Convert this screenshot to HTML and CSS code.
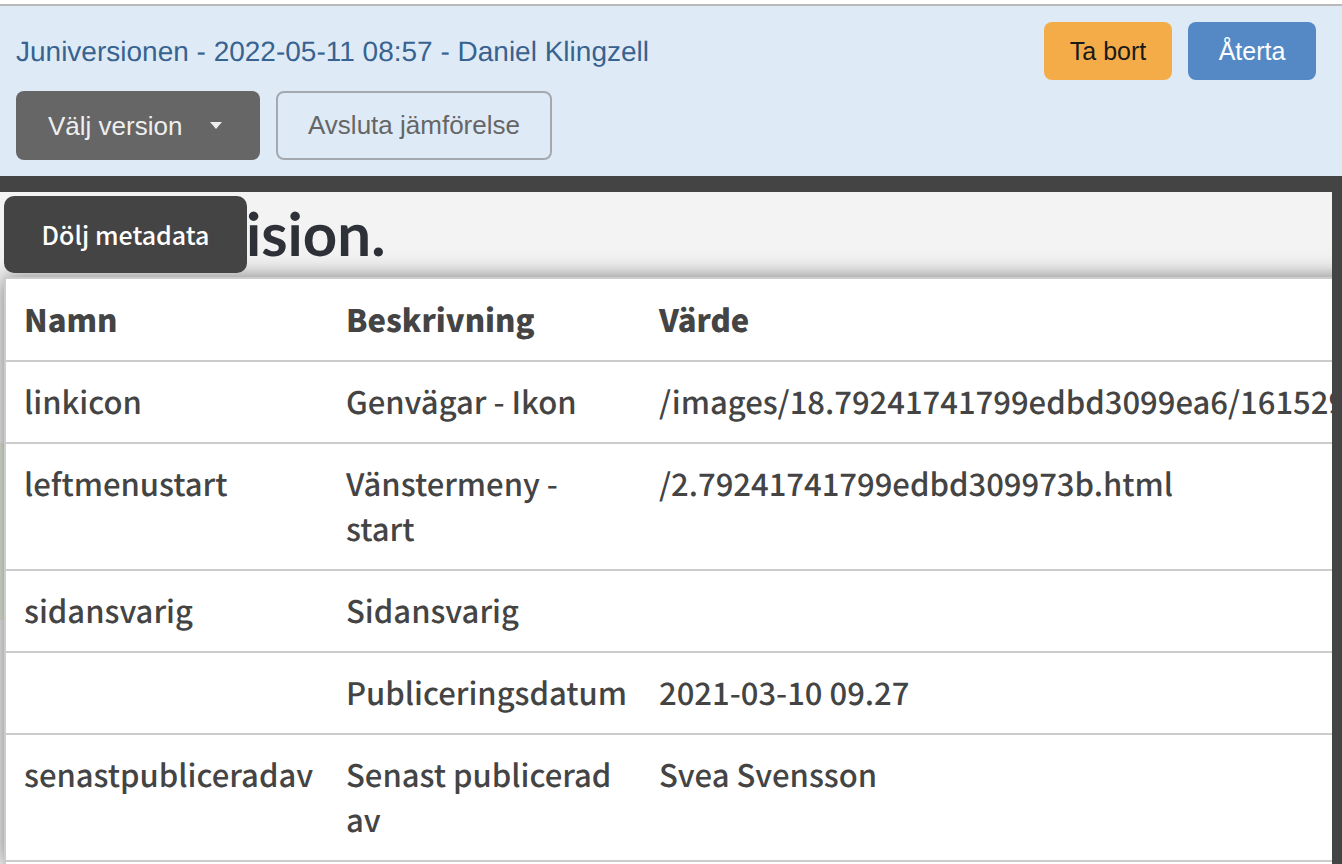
FILE: index.html
```html
<!DOCTYPE html>
<html lang="sv">
<head>
    <meta charset="utf-8">
    <meta name="viewport" content="width=device-width, initial-scale=1">
    <title>Juniversionen</title>
    <link rel="stylesheet" href="styles.css">
</head>
<body>
<div class="toolbar">
    <div class="toolbar-row">
        <h1 class="title">Juniversionen - 2022-05-11 08:57 - Daniel Klingzell</h1>
        <div class="actions">
            <button class="btn btn-warning" type="button">Ta bort</button>
            <button class="btn btn-primary" type="button">Återta</button>
        </div>
    </div>
    <div class="toolbar-row toolbar-compare">
        <select class="btn btn-lg version-select" aria-label="Välj version">
            <option>Välj version</option>
        </select>
        <button class="btn btn-lg btn-outline" type="button">Avsluta jämförelse</button>
    </div>
</div>
<main class="preview">
    <header class="site-header">
        <a class="logo" href="#">ision.</a>
        <button class="metadata-toggle" type="button">Dölj metadata</button>
    </header>
    <div class="metadata">
        <table class="metadata-table">
            <thead>
                <tr>
                    <th class="col-name" scope="col">Namn</th>
                    <th class="col-description" scope="col">Beskrivning</th>
                    <th scope="col">Värde</th>
                </tr>
            </thead>
            <tbody>
                <tr>
                    <td>linkicon</td>
                    <td>Genvägar - Ikon</td>
                    <td class="value">/images/18.79241741799edbd3099ea6/161529</td>
                </tr>
                <tr>
                    <td>leftmenustart</td>
                    <td>Vänstermeny - start</td>
                    <td class="value">/2.79241741799edbd309973b.html</td>
                </tr>
                <tr>
                    <td>sidansvarig</td>
                    <td>Sidansvarig</td>
                    <td class="value"></td>
                </tr>
                <tr>
                    <td></td>
                    <td>Publiceringsdatum</td>
                    <td class="value">2021-03-10 09.27</td>
                </tr>
                <tr>
                    <td>senastpubliceradav</td>
                    <td>Senast publicerad av</td>
                    <td class="value">Svea Svensson</td>
                </tr>
            </tbody>
        </table>
    </div>
</main>
</body>
</html>
```
FILE: styles.css
```css
*,
*::before,
*::after {
    box-sizing: border-box;
}

body {
    margin: 0;
    min-height: 100vh;
    display: flex;
    flex-direction: column;
    overflow: hidden;
    padding-top: 4px;
    background: #ffffff;
    font-family: "Liberation Sans", Arial, sans-serif;
    text-rendering: geometricPrecision;
}

/* toolbar */
.toolbar {
    display: flex;
    flex-direction: column;
    gap: 11px;
    padding: 16px 26px 16px 16px;
    border-top: 2px solid #b9b9b9;
    background: #deebf7;
}

.toolbar-row {
    display: flex;
    align-items: center;
    justify-content: space-between;
}

.toolbar-compare {
    justify-content: flex-start;
    gap: 16px;
}

.title {
    margin: 0;
    padding-top: 2px;
    font-size: 28px;
    font-weight: normal;
    color: #38628f;
}

.actions {
    display: flex;
    gap: 16px;
}

.btn {
    height: 58px;
    min-width: 128px;
    border: 0;
    border-radius: 8px;
    font-family: inherit;
    font-size: 25px;
    cursor: pointer;
}

.btn-lg {
    height: 69px;
    padding: 0 30px;
    font-size: 26px;
}

.btn-warning {
    background: #f4ac48;
    color: #1a1a1a;
}

.btn-primary {
    background: #5489c6;
    color: #ffffff;
}

.btn-outline {
    border: 2px solid #a3a9af;
    background: transparent;
    color: #666666;
}

.version-select {
    appearance: none;
    width: 244px;
    padding-left: 32px;
    background: #666666 url("data:image/svg+xml,%3Csvg xmlns='http://www.w3.org/2000/svg' width='12' height='8'%3E%3Cpath d='M0 0h12L6 7z' fill='%23eeeeee'/%3E%3C/svg%3E") no-repeat right 38px center;
    color: #eeeeee;
}

/* page preview */
.preview {
    flex: 1;
    display: flex;
    flex-direction: column;
    border-top: 16px solid #444444;
    border-right: 10px solid #444444;
    overflow: hidden;
    background: linear-gradient(#f3f3f3 251px, #e8eee1 251px, #e8eee1 428px, #f3f3f3 428px);
    font-family: "Noto Sans CJK SC", sans-serif;
}

.site-header {
    position: relative;
    height: 85px;
    padding-left: 246px;
    background: #f3f3f3;
}

.logo {
    font-family: Lato, sans-serif;
    font-size: 60px;
    font-weight: bold;
    line-height: 82px;
    color: #2e3238;
    text-decoration: none;
}

.metadata-toggle {
    position: absolute;
    z-index: 1;
    top: 4px;
    left: 4px;
    width: 243px;
    height: 77px;
    padding-bottom: 3px;
    border: 0;
    border-radius: 10px;
    background: #444444;
    color: #ffffff;
    font-family: inherit;
    font-size: 25px;
    font-weight: 500;
    cursor: pointer;
}

/* runs past the right edge of the preview, which clips it */
.metadata {
    position: relative;
    flex: 1;
    margin: 0 -40px 0 4px;
    border: 2px solid #cccccc;
    border-width: 2px 0 0 2px;
    background: #ffffff;
    box-shadow: 0 0 20px rgba(0, 0, 0, 0.5);
}

.metadata-table {
    width: 100%;
    table-layout: fixed;
    border-collapse: separate;
    border-spacing: 0;
    font-size: 31px;
    line-height: 45px;
    color: #444444;
}

.metadata-table th,
.metadata-table td {
    padding: 16px 18px 19px;
    border-bottom: 2px solid #cccccc;
    text-align: left;
    vertical-align: top;
}

.metadata-table td {
    height: 82px;
    font-weight: 500;
}

.metadata-table th {
    height: 83px;
    padding-top: 17px;
    font-weight: 900;
}

.col-name {
    width: 322px;
}

.col-description {
    width: 313px;
}

.metadata-table .value {
    white-space: nowrap;
}
```
